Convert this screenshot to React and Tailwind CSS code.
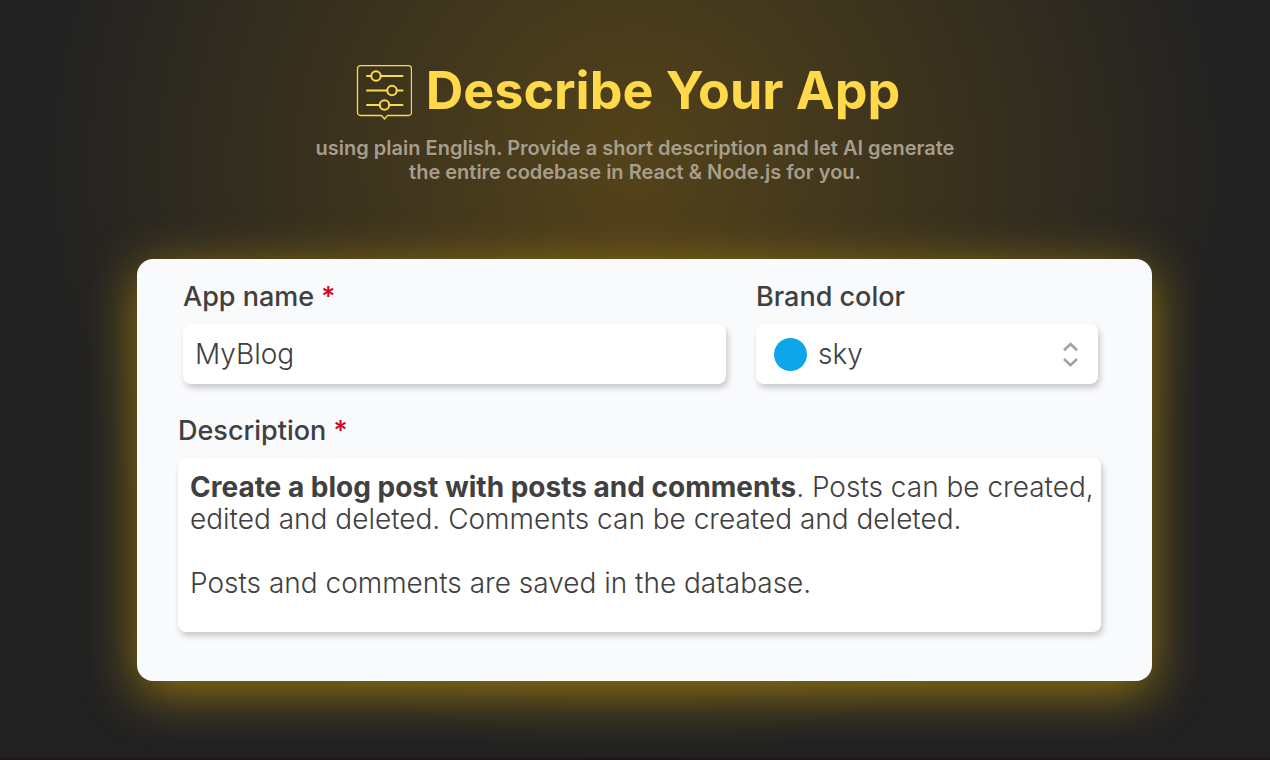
import { useState } from "react";

const colors = [
  { name: "sky", dot: "bg-[#0ea5e9]" },
  { name: "emerald", dot: "bg-[#10b981]" },
  { name: "amber", dot: "bg-[#f59e0b]" },
  { name: "rose", dot: "bg-[#f43f5e]" },
];

const fieldClass =
  "w-full rounded-lg bg-white text-[28px] leading-8 font-[350] text-[#404040] shadow-[2px_4px_6px_rgba(0,0,0,0.2)] outline-none";

function SlidersIcon() {
  return (
    <svg width="56" height="56" viewBox="0 0 56 56" fill="none" stroke="#ffd94a" aria-hidden="true">
      <path
        d="M4.500 1.700h48a3 3 0 0 1 3 3v43.800a3 3 0 0 1-3 3H31.500L28.500 55l-3-3.500h-21a3 3 0 0 1-3-3V4.700a3 3 0 0 1 3-3z"
        strokeWidth="1.300"
        strokeLinejoin="round"
      />
      <g strokeWidth="2" strokeLinecap="round">
        <path d="M11 12h4M25 12h21.500" />
        <path d="M11 26.500h20M41 26.500h5.500" />
        <path d="M11 41h12.500M33.500 41h13" />
        <circle cx="20" cy="12" r="4.700" />
        <circle cx="36" cy="26.500" r="4.700" />
        <circle cx="28.500" cy="41" r="4.700" />
      </g>
    </svg>
  );
}

function Label({ id, htmlFor, required, children }) {
  return (
    <label
      id={id}
      htmlFor={htmlFor}
      className="mb-[11px] block text-[27px] leading-8 font-medium text-[#404040]"
    >
      {children}
      {required && <span className="text-[#d0021b]"> *</span>}
    </label>
  );
}

export default function App() {
  const [name, setName] = useState("MyBlog");
  const [color, setColor] = useState("sky");
  const selected = colors.find((c) => c.name === color);

  return (
    <main className="min-h-screen border-b-3 border-[#21171b] bg-[#222222] bg-[radial-gradient(circle_600px_at_50%_165px,#54431a,#222222)] pt-16 pb-[76px] pl-[137px] pr-[118px] font-[Inter,sans-serif]">
      <header className="-ml-[19px] text-center">
        <div className="flex items-start justify-center gap-[14px] pr-[14px]">
          <SlidersIcon />
          <h1 className="text-[52px] leading-[54px] font-bold text-[#ffd94a]">Describe Your App</h1>
        </div>
        <p className="mx-auto mt-4 max-w-[660px] text-xl leading-6 font-semibold text-[#a69e8c]">
          using plain English. Provide a short description and let AI generate the entire codebase in
          React &amp; Node.js for you.
        </p>
      </header>

      <form
        onSubmit={(e) => e.preventDefault()}
        className="mt-[75px] rounded-2xl bg-[#f9fafc] pt-[22px] pr-[51px] pb-[49px] pl-[41px] shadow-[0_12px_50px_rgba(255,200,0,0.5)]"
      >
        <div className="grid grid-cols-[543fr_342fr] gap-[30px] pr-[3px] pl-[5px]">
          <div>
            <Label htmlFor="name" required>
              App name
            </Label>
            <input
              id="name"
              type="text"
              required
              value={name}
              onChange={(e) => setName(e.target.value)}
              className={`${fieldClass} h-15 px-3`}
            />
          </div>
          <div>
            <Label htmlFor="color">Brand color</Label>
            <div className="relative">
              <select
                id="color"
                value={color}
                onChange={(e) => setColor(e.target.value)}
                className={`${fieldClass} h-15 appearance-none pr-12 pl-[62px]`}
              >
                {colors.map((c) => (
                  <option key={c.name}>{c.name}</option>
                ))}
              </select>
              <span
                className={`pointer-events-none absolute top-[14px] left-[18px] size-[33px] rounded-full ${selected.dot}`}
              />
              <svg
                className="pointer-events-none absolute top-4 right-[18px]"
                width="20"
                height="28"
                viewBox="0 0 20 28"
                fill="none"
                stroke="#9ca3af"
                strokeWidth="2.600"
                aria-hidden="true"
              >
                <path d="M4 10.300 10.500 4l6.500 6.300M4 19l6.500 6.300L17 19" />
              </svg>
            </div>
          </div>
        </div>

        <div className="mt-[31px]">
          <Label id="description-label" required>
            Description
          </Label>
          {/* rich text, so a plain textarea is not enough */}
          <div
            role="textbox"
            aria-multiline="true"
            aria-labelledby="description-label"
            contentEditable
            suppressContentEditableWarning
            className={`${fieldClass} min-h-[174px] pt-[13px] pr-1 pb-8 pl-3`}
          >
            <p>
              <strong>Create a blog post with posts and comments</strong>. Posts can be created, edited
              and deleted. Comments can be created and deleted.
            </p>
            <p className="mt-8">Posts and comments are saved in the database.</p>
          </div>
        </div>
      </form>
    </main>
  );
}
